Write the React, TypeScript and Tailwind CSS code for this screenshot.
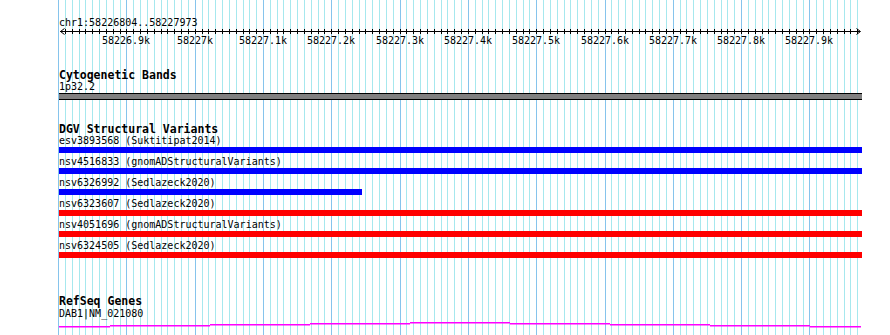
const X0 = 58.6;
const STEP = 6.83;
const LEFT = 59;
const WIDTH = 803;

const gridXs = Array.from({ length: 118 }, (_, k) => ({
  k,
  x: Math.floor(X0 + k * STEP),
}));

const axisLabels = [
  "58226.9k",
  "58227k",
  "58227.1k",
  "58227.2k",
  "58227.3k",
  "58227.4k",
  "58227.5k",
  "58227.6k",
  "58227.7k",
  "58227.8k",
  "58227.9k",
];

const variants = [
  { label: "esv3893568 (Suktitipat2014)", color: "bg-[#0000ff]", width: WIDTH },
  { label: "nsv4516833 (gnomADStructuralVariants)", color: "bg-[#0000ff]", width: WIDTH },
  { label: "nsv6326992 (Sedlazeck2020)", color: "bg-[#0000ff]", width: 303 },
  { label: "nsv6323607 (Sedlazeck2020)", color: "bg-[#ff0000]", width: WIDTH },
  { label: "nsv4051696 (gnomADStructuralVariants)", color: "bg-[#ff0000]", width: WIDTH },
  { label: "nsv6324505 (Sedlazeck2020)", color: "bg-[#ff0000]", width: WIDTH },
];

// gene line drawn in small steps, like the canvas renders it
const geneSegs = [
  { x1: 59, x2: 110, y: 3 },
  { x1: 110, x2: 210, y: 2 },
  { x1: 210, x2: 310, y: 1 },
  { x1: 310, x2: 410, y: 0 },
  { x1: 410, x2: 510, y: -1 },
  { x1: 510, x2: 610, y: 0 },
  { x1: 610, x2: 710, y: 1 },
  { x1: 710, x2: 810, y: 2 },
  { x1: 810, x2: 861, y: 3 },
];

function Ruler() {
  return (
    <svg width={WIDTH} height={7} className="block">
      <rect x={1} y={3} width={800} height={1} fill="#000" />
      {gridXs.slice(1).map((g) => (
        <rect key={g.k} x={g.x - LEFT} y={1} width={1} height={5} fill="#000" />
      ))}
      <path d="M5.5 0.5 L1.5 3.5 L5.5 6.5" fill="none" stroke="#000" strokeWidth={1} />
      <path d="M797.5 0.5 L801.5 3.5 L797.5 6.5" fill="none" stroke="#000" strokeWidth={1} />
    </svg>
  );
}

export default function App() {
  return (
    <div className="relative h-[335px] w-[890px] overflow-hidden bg-white font-['DejaVu_Sans_Mono',monospace] text-[10px] text-black">
      <svg width={890} height={335} className="absolute left-0 top-0">
        {gridXs.map((g) => (
          <rect
            key={g.k}
            x={g.x}
            y={0}
            width={1}
            height={335}
            fill={g.k % 10 === 0 ? "#86c4ec" : "#a6e8ee"}
          />
        ))}
      </svg>

      <div className="relative ml-[59px] flex w-[803px] flex-col">
        <div className="mt-[15px] h-[13px] whitespace-pre leading-[15px]">chr1:58226804..58227973</div>
        <Ruler />
        <div className="relative h-[12px] leading-[12px]">
          {axisLabels.map((t, i) => (
            <span
              key={t}
              className="absolute top-0 -translate-x-1/2 whitespace-pre"
              style={{ left: gridXs[(i + 1) * 10].x - LEFT }}
            >
              {t}
            </span>
          ))}
        </div>

        <div className="mt-[20px] h-[13px] text-[11.5px] font-bold leading-[16px]">Cytogenetic Bands</div>
        <div className="h-[13px] leading-[13px]">1p32.2</div>
        <div className="h-[7px] border-y border-black bg-[#808080]" />

        <div className="mt-[21px] h-[14px] text-[11.5px] font-bold leading-[16px]">DGV Structural Variants</div>
        <div className="flex flex-col gap-[3px]">
          {variants.map((v) => (
            <div key={v.label} className="flex flex-col">
              <div className="h-[12px] whitespace-pre leading-[11px]">{v.label}</div>
              <div className={`h-[6px] ${v.color}`} style={{ width: v.width }} />
            </div>
          ))}
        </div>

        <div className="mt-[36px] h-[14px] text-[11.5px] font-bold leading-[15px]">RefSeq Genes</div>
        <div className="h-[12px] leading-[12px]">DAB1|NM_021080</div>
        <svg width={WIDTH} height={8} className="block">
          {geneSegs.map((s) => (
            <rect key={s.x1} x={s.x1 - LEFT} y={s.y + 3} width={s.x2 - s.x1} height={1.5} fill="#ff00ff" />
          ))}
        </svg>
      </div>
    </div>
  );
}
